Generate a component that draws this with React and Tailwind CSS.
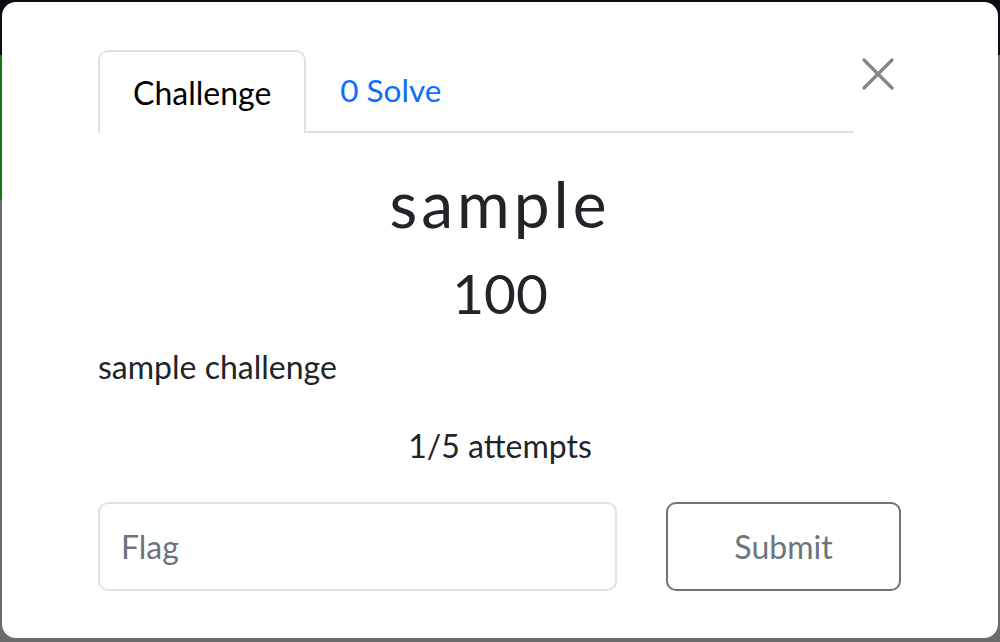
import { useState } from 'react';

export default function App() {
  const [flag, setFlag] = useState('');
  const [tab, setTab] = useState('challenge');

  return (
    <div className="relative w-[1000px] h-[642px] overflow-hidden bg-[#6b6b6b] p-[2px] font-['Lato','Liberation_Sans',sans-serif] text-[#212529]">
      {/* page behind the modal */}
      <div className="absolute inset-x-0 top-0 h-[55px] bg-[#0c0c12]" />
      <div className="absolute left-0 top-[55px] h-[145px] w-[3px] bg-[#0e7a1a]" />

      {/* Modal */}
      <div className="relative h-[636px] rounded-[14px] bg-white pt-[48px] pl-[96px] pr-[96px]">
        {/* Header: tabs + close */}
        <div className="flex items-start">
          <nav className="flex flex-1 border-b-2 border-[#dee2e6]">
            <button
              onClick={() => setTab('challenge')}
              className="-mb-[2px] h-[83px] rounded-t-[10px] border-2 border-b-0 border-[#dee2e6] bg-white px-[33px] text-[32px] text-black"
            >
              Challenge
            </button>
            <button
              onClick={() => setTab('solves')}
              className="h-[81px] pl-[34px] pr-[35px] text-[31.5px] text-[#0d6efd]"
            >
              0 Solve
            </button>
          </nav>
          <button className="mt-[8px] flex h-[32px] w-[48px] items-center justify-center text-[#858585]">
            <svg width="32" height="32" viewBox="0 0 32 32" fill="none" stroke="currentColor" strokeWidth="3.2" strokeLinecap="round">
              <path d="M2 2L30 30M30 2L2 30" />
            </svg>
          </button>
        </div>

        {/* Body */}
        <div className="pt-[33px]">
          <h2 className="text-center text-[64px] leading-[76px] tracking-[4px]">sample</h2>
          <h3 className="mt-[19px] text-center text-[55px] leading-[64px]">100</h3>
          <p className="mt-[22px] text-[32px] leading-[40px]">sample challenge</p>
          <p className="mt-[39px] text-center text-[32px] leading-[40px]">1/5 attempts</p>

          <div className="mt-[36px] flex gap-[49px] pr-[1px]">
            <input
              value={flag}
              onChange={e => setFlag(e.target.value)}
              placeholder="Flag"
              className="h-[89px] w-[519px] rounded-[10px] border-2 border-[#dee2e6] px-[21px] text-[32px] text-[#212529] outline-none placeholder:text-[#6c757d]"
            />
            <button className="h-[89px] flex-1 rounded-[10px] border-2 border-[#6c757d] text-[32px] text-[#6c757d]">
              Submit
            </button>
          </div>
        </div>
      </div>
    </div>
  );
}
